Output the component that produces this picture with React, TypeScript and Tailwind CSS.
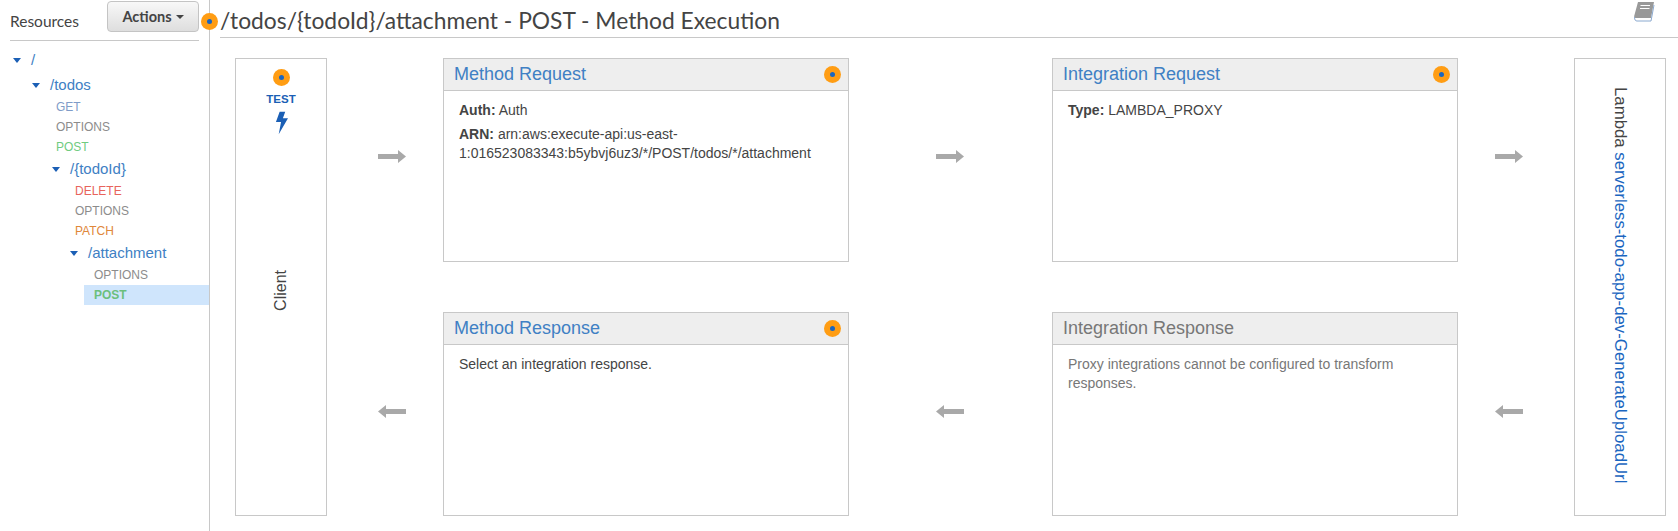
import React from "react";

function Dot({ className = "" }: { className?: string }) {
  return (
    <span className={`flex h-[17px] w-[17px] shrink-0 items-center justify-center rounded-full bg-[#ff9d14] ${className}`}>
      <span className="h-[5px] w-[5px] rounded-full bg-[#1b66c0]" />
    </span>
  );
}

function Caret() {
  return (
    <svg width="8" height="5" viewBox="0 0 8 5" className="shrink-0">
      <path d="M0 0H8L4 5Z" fill="#1b5fb5" />
    </svg>
  );
}

function Arrow({ left = false, className = "" }: { left?: boolean; className?: string }) {
  return (
    <svg width="28" height="13" viewBox="0 0 28 13" className={`${left ? "rotate-180" : ""} ${className}`}>
      <path d="M0 4H20V0L28 6.5L20 13V9H0Z" fill="#a9a9a9" />
    </svg>
  );
}

function Resource({ name, pad }: { name: string; pad: string }) {
  return (
    <div className={`flex h-[24px] items-center gap-[10px] text-[15px] text-[#4080c4] ${pad}`}>
      <Caret />
      <span>{name}</span>
    </div>
  );
}

function Method({ name, color, pad }: { name: string; color: string; pad: string }) {
  return <div className={`flex h-[20px] items-center text-[12px] ${color} ${pad}`}>{name}</div>;
}

function Box({ title, titleColor = "text-[#4080c4]", dot = true, children }: { title: string; titleColor?: string; dot?: boolean; children: React.ReactNode }) {
  return (
    <div className="flex h-[204px] w-[406px] flex-col border border-[#c8c8c8]">
      <div className="flex h-[32px] shrink-0 items-center justify-between border-b border-[#c8c8c8] bg-[#eeeeee] pl-[10px] pr-[7px]">
        <span className={`text-[18px] ${titleColor}`}>{title}</span>
        {dot && <Dot className="-mt-[1px]" />}
      </div>
      <div className="px-[15px] pt-[10px] text-[14px] leading-[19px] text-[#444444]">{children}</div>
    </div>
  );
}

export default function App() {
  return (
    <div className="flex h-[531px] w-[1678px] overflow-hidden bg-white font-['Liberation_Sans',sans-serif]">
      <aside className="h-full w-[210px] shrink-0 border-r border-[#c8c8c8] pl-[10px] pr-[10px]">
        <div className="flex h-[41px] items-start justify-between border-b border-[#c8c8c8] pt-[1px]">
          <span className="mt-[9px] font-['Lato',sans-serif] text-[15.5px] text-[#444444]">Resources</span>
          <button className="flex h-[31px] w-[92px] items-center justify-center gap-[4px] rounded-[4px] border border-[#c4c4c4] bg-gradient-to-b from-[#f8f8f8] to-[#dedede] font-['Lato',sans-serif] text-[14.5px] font-bold text-[#444444]">
            Actions
            <svg width="8" height="4" viewBox="0 0 8 4"><path d="M0 0H8L4 4Z" fill="#444444" /></svg>
          </button>
        </div>
        <div className="pt-[7px]">
          <Resource name="/" pad="pl-[3px]" />
          <div className="h-[1px]" />
          <Resource name="/todos" pad="pl-[22px]" />
          <Method name="GET" color="text-[#7f9cc8]" pad="pl-[46px]" />
          <Method name="OPTIONS" color="text-[#8c8c8c]" pad="pl-[46px]" />
          <Method name="POST" color="text-[#6fcb7f]" pad="pl-[46px]" />
          <Resource name="/{todoId}" pad="pl-[42px]" />
          <Method name="DELETE" color="text-[#e8645c]" pad="pl-[65px]" />
          <Method name="OPTIONS" color="text-[#8c8c8c]" pad="pl-[65px]" />
          <Method name="PATCH" color="text-[#e0873a]" pad="pl-[65px]" />
          <Resource name="/attachment" pad="pl-[60px]" />
          <Method name="OPTIONS" color="text-[#8c8c8c]" pad="pl-[84px]" />
          <div className="-mr-[10px] ml-[74px] flex h-[20px] items-center bg-[#cfe5fc] pl-[10px] text-[12px] font-bold text-[#6cbf7c]">POST</div>
        </div>
      </aside>

      <main className="relative min-w-0 flex-1">
        <Dot className="absolute -left-[9px] top-[13px]" />
        <div className="ml-[10px] flex h-[38px] items-center justify-between border-b border-[#c8c8c8] pr-[23px]">
          <h1 className="mt-[3px] font-['Lato',sans-serif] text-[22.8px] text-[#444444]">/todos/{"{todoId}"}/attachment - POST - Method Execution</h1>
          <svg width="22" height="22" viewBox="0 0 22 22" className="-mt-[14px]">
            <path d="M5 1H21L18 17H2.5C1.5 17 1 16 1.2 15Z" fill="#999999" />
            <path d="M1.5 16C1.5 19 2.5 20 4 20H18L21 4" fill="none" stroke="#8aa9cf" strokeWidth="1" />
            <path d="M7.5 4.5H17M7 7.5H16.5" stroke="#ffffff" strokeWidth="1.2" />
          </svg>
        </div>

        <div className="flex pl-[25px] pt-[20px]">
          <div className="flex h-[458px] w-[92px] flex-col items-center border border-[#c8c8c8] pt-[10px]">
            <Dot />
            <span className="mt-[6px] text-[11.5px] font-bold leading-[14px] text-[#1b5fb5]">TEST</span>
            <svg width="13" height="24" viewBox="0 0 14 24" className="mt-[5px]">
              <path d="M5 0H11L8.5 7H14L4 24L6.5 11H1Z" fill="#1b5fb5" />
            </svg>
            <span className="mt-[135px] rotate-180 text-[16px] text-[#444444] [writing-mode:vertical-rl]">Client</span>
          </div>

          <div className="flex w-[116px] flex-col pl-[51px] pt-[92px]">
            <Arrow />
            <Arrow left className="mt-[242px]" />
          </div>

          <div className="flex flex-col gap-[50px]">
            <Box title="Method Request">
              <p><b>Auth:</b> Auth</p>
              <p className="mt-[5px]"><b>ARN:</b> arn:aws:execute-api:us-east-1:016523083343:b5ybvj6uz3/*/POST/todos/*/attachment</p>
            </Box>
            <Box title="Method Response">
              <p>Select an integration response.</p>
            </Box>
          </div>

          <div className="flex w-[203px] flex-col pl-[87px] pt-[92px]">
            <Arrow />
            <Arrow left className="mt-[242px]" />
          </div>

          <div className="flex flex-col gap-[50px]">
            <Box title="Integration Request">
              <p><b>Type:</b> LAMBDA_PROXY</p>
            </Box>
            <Box title="Integration Response" titleColor="text-[#777777]" dot={false}>
              <p className="text-[#777777]">Proxy integrations cannot be configured to transform responses.</p>
            </Box>
          </div>

          <div className="flex w-[116px] flex-col pl-[37px] pt-[92px]">
            <Arrow />
            <Arrow left className="mt-[242px]" />
          </div>

          <div className="flex h-[458px] w-[92px] justify-center border border-[#c8c8c8] pt-[28px]">
            <span className="text-[16.8px] text-[#444444] [writing-mode:vertical-rl]">
              Lambda <span className="text-[#1b66c0]">serverless-todo-app-dev-GenerateUploadUrl</span>
            </span>
          </div>
        </div>
      </main>
    </div>
  );
}
